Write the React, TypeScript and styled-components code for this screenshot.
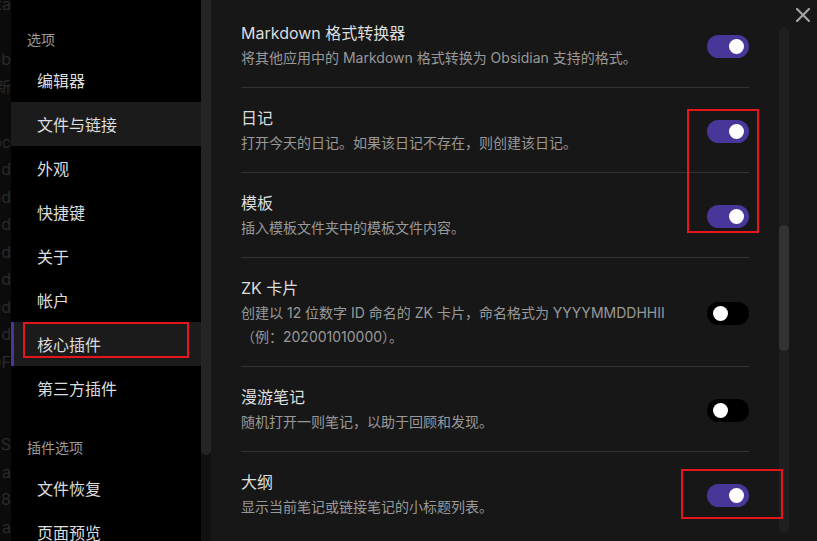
import styled, { createGlobalStyle } from "styled-components";

const GlobalStyle = createGlobalStyle`
  html, body {
    margin: 0;
    padding: 0;
    background: #0b0b0b;
  }
  * {
    box-sizing: border-box;
  }
`;

type Plugin = {
  title: string;
  desc: React.ReactNode;
  on: boolean;
};

const plugins: Plugin[] = [
  {
    title: "Markdown 格式转换器",
    desc: "将其他应用中的 Markdown 格式转换为 Obsidian 支持的格式。",
    on: true,
  },
  {
    title: "日记",
    desc: "打开今天的日记。如果该日记不存在，则创建该日记。",
    on: true,
  },
  { title: "模板", desc: "插入模板文件夹中的模板文件内容。", on: true },
  {
    title: "ZK 卡片",
    desc: (
      <>
        创建以 12 位数字 ID 命名的 ZK 卡片，命名格式为 YYYYMMDDHHII
        <br />
        （例：202001010000）。
      </>
    ),
    on: false,
  },
  {
    title: "漫游笔记",
    desc: "随机打开一则笔记，以助于回顾和发现。",
    on: false,
  },
  { title: "大纲", desc: "显示当前笔记或链接笔记的小标题列表。", on: true },
];

const behind = [
  "data", "", "ob", "新", "", "doc", "d", "ud", "d", "d", "d", "ud", "d",
  "PDF", "", "", "S", "a", "x8", "a",
];

function Toggle({ on }: { on: boolean }) {
  return (
    <Switch $on={on}>
      <Knob />
    </Switch>
  );
}

function App() {
  return (
    <Screen>
      <GlobalStyle />
      <Backdrop>
        {behind.map((t, i) => (
          <BehindLine key={i}>{t}</BehindLine>
        ))}
      </Backdrop>
      <Modal>
        <Sidebar>
          <NavHeader>选项</NavHeader>
          <NavItem>编辑器</NavItem>
          <NavItem $hover>文件与链接</NavItem>
          <NavItem>外观</NavItem>
          <NavItem>快捷键</NavItem>
          <NavItem>关于</NavItem>
          <NavItem>帐户</NavItem>
          <NavItem $active>核心插件</NavItem>
          <NavItem>第三方插件</NavItem>
          <NavHeader $spaced>插件选项</NavHeader>
          <NavItem>文件恢复</NavItem>
          <NavItem>页面预览</NavItem>
        </Sidebar>
        <SideTrack>
          <SideThumb />
        </SideTrack>
        <Content>
          <List>
            {plugins.map((p) => (
              <Row key={p.title}>
                <Info>
                  <Title>{p.title}</Title>
                  <Desc>{p.desc}</Desc>
                </Info>
                <Toggle on={p.on} />
              </Row>
            ))}
          </List>
          <Track>
            <Thumb />
          </Track>
          <Close>
            <svg width="14" height="14" viewBox="0 0 14 14">
              <path
                d="M1 1 L13 13 M13 1 L1 13"
                stroke="#a3a3a3"
                strokeWidth="2.2"
                strokeLinecap="square"
              />
            </svg>
          </Close>
        </Content>
      </Modal>
      <Mark $x={23} $y={322} $w={166} $h={36} />
      <Mark $x={687} $y={109} $w={72} $h={124} />
      <Mark $x={681} $y={469} $w={102} $h={50} />
    </Screen>
  );
}

export default App;

const Screen = styled.div`
  position: relative;
  width: 817px;
  height: 541px;
  display: flex;
  overflow: hidden;
  font-family: "Inter", "Noto Sans CJK SC", sans-serif;
  background: #0b0b0b;
`;

const Backdrop = styled.div`
  width: 11px;
  flex-shrink: 0;
  padding-top: -9px;
  margin-top: -9px;
  display: flex;
  flex-direction: column;
  align-items: flex-end;
  overflow: hidden;
`;

const BehindLine = styled.div`
  height: 27.5px;
  line-height: 27.5px;
  font-size: 16px;
  color: #2a2a2a;
  white-space: nowrap;
`;

const Modal = styled.div`
  flex: 1;
  display: flex;
  height: 100%;
`;

const Sidebar = styled.nav`
  width: 190px;
  background: #000;
  padding-top: 31px;
  display: flex;
  flex-direction: column;
`;

const NavHeader = styled.div<{ $spaced?: boolean }>`
  height: 18px;
  line-height: 18px;
  font-size: 14px;
  color: #999;
  padding-left: 16px;
  margin-top: ${(p) => (p.$spaced ? "29px" : "0")};
  margin-bottom: 9px;
`;

const NavItem = styled.div<{ $hover?: boolean; $active?: boolean }>`
  height: 44px;
  flex-shrink: 0;
  display: flex;
  align-items: center;
  padding-left: ${(p) => (p.$active ? "23px" : "26px")};
  font-size: 16px;
  color: #dcddde;
  background: ${(p) => (p.$hover || p.$active ? "#1b1b1b" : "transparent")};
  border-left: ${(p) => (p.$active ? "3px solid #483699" : "none")};
`;

const SideTrack = styled.div`
  width: 10px;
  background: #111;
`;

const SideThumb = styled.div`
  height: 455px;
  background: #252525;
  border-radius: 0 0 5px 5px;
`;

const Content = styled.main`
  position: relative;
  flex: 1;
  background: #171717;
  display: flex;
`;

const List = styled.div`
  width: 508px;
  margin: 3px 30px 0 30px;
  display: flex;
  flex-direction: column;
`;

const Row = styled.div`
  display: flex;
  align-items: center;
  justify-content: space-between;
  padding: 19px 0 17px;
  border-bottom: 1px solid #333;
  &:last-child {
    border-bottom: none;
  }
`;

const Info = styled.div`
  display: flex;
  flex-direction: column;
`;

const Title = styled.div`
  font-size: 16px;
  line-height: 22px;
  color: #dcddde;
`;

const Desc = styled.div`
  font-size: 14px;
  line-height: 24px;
  margin-top: 2px;
  color: #999;
`;

const Switch = styled.div<{ $on: boolean }>`
  width: 42px;
  height: 23px;
  flex-shrink: 0;
  border-radius: 12px;
  background: ${(p) => (p.$on ? "#483699" : "#000")};
  display: flex;
  align-items: center;
  justify-content: ${(p) => (p.$on ? "flex-end" : "flex-start")};
  padding: 0 5px 0 6px;
`;

const Knob = styled.div`
  width: 15px;
  height: 15px;
  border-radius: 50%;
  background: #fff;
`;

const Track = styled.div`
  width: 10px;
  height: 506px;
  margin-top: 27px;
  background: #1f1f1f;
  border-radius: 5px;
  padding-top: 198px;
`;

const Thumb = styled.div`
  height: 126px;
  background: #333;
  border-radius: 5px;
`;

const Close = styled.div`
  position: absolute;
  top: 8px;
  right: 7px;
  width: 14px;
  height: 14px;
  display: flex;
`;

const Mark = styled.div<{ $x: number; $y: number; $w: number; $h: number }>`
  position: absolute;
  left: ${(p) => p.$x}px;
  top: ${(p) => p.$y}px;
  width: ${(p) => p.$w}px;
  height: ${(p) => p.$h}px;
  border: 2px solid #e8141c;
  pointer-events: none;
`;
